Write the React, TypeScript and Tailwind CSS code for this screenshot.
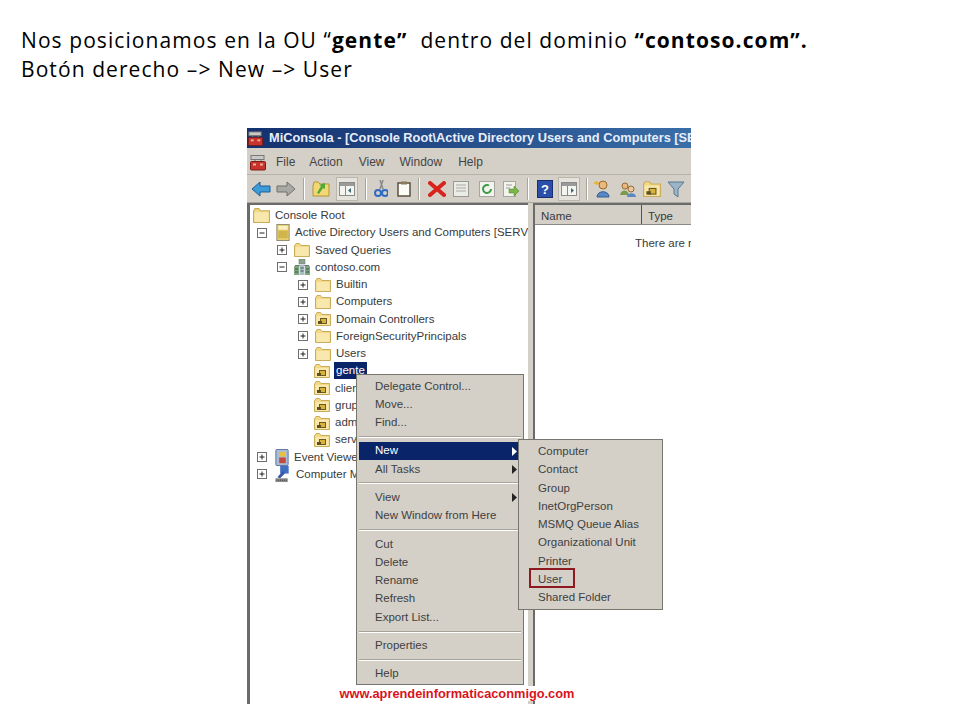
import React from "react";

const ui = "font-['Liberation_Sans',Arial,sans-serif]";

function Folder({ lock = false, className = "w-4 h-[14px]" }: { lock?: boolean; className?: string }) {
  return (
    <svg viewBox="0 0 16 14" className={`${className} shrink-0`}>
      <path d="M0.5 3 L0.5 13.5 L15.5 13.5 L15.5 2.5 L7 2.5 L5.5 0.5 L2 0.5 Z" fill="#f3d987" stroke="#c9ad5a" strokeWidth="1" />
      <rect x="1.5" y="4" width="13" height="9" fill="#f8e8ae" />
      {lock && (
        <>
          <rect x="5.5" y="6.5" width="6" height="5" fill="#d8b23c" stroke="#6b5a20" strokeWidth="1" />
          <rect x="3" y="9" width="4" height="3" fill="#5c5020" />
        </>
      )}
    </svg>
  );
}

function Toggle({ open = false }: { open?: boolean }) {
  return (
    <svg viewBox="0 0 10 10" className="w-[10px] h-[10px] shrink-0">
      <rect x="0.5" y="0.5" width="9" height="9" fill="#fff" stroke="#6e6e6e" />
      <path d={open ? "M2.5 5 H7.5" : "M2.5 5 H7.5 M5 2.5 V7.5"} stroke="#222" strokeWidth="1" />
    </svg>
  );
}

function SnapIn() {
  return (
    <svg viewBox="0 0 14 18" className="w-[14px] h-[17px] shrink-0">
      <rect x="0.5" y="0.5" width="13" height="17" fill="#e6cf6e" stroke="#8f8a70" />
      <rect x="2" y="2" width="10" height="4" fill="#f8f0c0" />
      <rect x="2" y="7" width="10" height="8" fill="#d2b44c" />
    </svg>
  );
}

function Domain() {
  return (
    <svg viewBox="0 0 16 16" className="w-4 h-4 shrink-0">
      <rect x="5" y="0" width="6" height="5" fill="#8aa58c" stroke="#5f7565" strokeWidth="0.5" />
      <path d="M1 6.5 H15" stroke="#6a7a70" />
      <rect x="0" y="7" width="5" height="9" fill="#7fa67f" />
      <rect x="5.5" y="6" width="5" height="10" fill="#a9bcc4" />
      <rect x="11" y="7" width="5" height="9" fill="#7fa67f" />
      <path d="M1 10 H4 M1 13 H4 M6.5 9 H9.5 M6.5 12 H9.5 M12 10 H15 M12 13 H15" stroke="#40524a" />
    </svg>
  );
}

function EventIcon() {
  return (
    <svg viewBox="0 0 14 18" className="w-[14px] h-[17px] shrink-0">
      <rect x="0.5" y="0.5" width="13" height="17" rx="1" fill="#a9bcd8" stroke="#5a6f96" />
      <rect x="4" y="3" width="7" height="5" fill="#e8c040" />
      <rect x="4" y="9" width="7" height="6" fill="#c8483c" />
    </svg>
  );
}

function ComputerIcon() {
  return (
    <svg viewBox="0 0 16 18" className="w-4 h-[17px] shrink-0">
      <rect x="5" y="0" width="9" height="8" fill="#3f6fc0" />
      <path d="M2 12 L8 5 L10 8 L5 13 Z" fill="#3a56a8" />
      <rect x="0" y="13" width="13" height="4" fill="#8b8b8b" />
      <path d="M1 15 H12" stroke="#333" strokeDasharray="1 1" />
    </svg>
  );
}

function ToolboxIcon({ className }: { className: string }) {
  return (
    <svg viewBox="0 0 16 16" className={className}>
      <rect x="1" y="1" width="13" height="4" fill="#c9c9c9" stroke="#777" />
      <path d="M5 7 V5 H11 V7" fill="none" stroke="#777" />
      <rect x="0.5" y="7" width="15" height="8.5" rx="1" fill="#c8342c" stroke="#7c1c18" />
      <rect x="3" y="9" width="3" height="2" fill="#f0b0a0" />
      <rect x="10" y="9" width="3" height="2" fill="#f0b0a0" />
    </svg>
  );
}

function Arrow({ dir, fill, stroke }: { dir: "left" | "right"; fill: string; stroke: string }) {
  return (
    <svg viewBox="0 0 20 16" className="w-5 h-4 shrink-0">
      <path
        d={dir === "left" ? "M1 8 L9 1 V5 H19 V11 H9 V15 Z" : "M19 8 L11 1 V5 H1 V11 H11 V15 Z"}
        fill={fill}
        stroke={stroke}
      />
    </svg>
  );
}

function PanelIcon({ side }: { side: "left" | "right" }) {
  return (
    <div className="w-[22px] h-[24px] flex items-center justify-center bg-[#e6e3dc] border border-[#b9b6ae] shrink-0">
      <svg viewBox="0 0 16 14" className="w-4 h-[14px]">
        <rect x="0.5" y="0.5" width="15" height="13" fill="#f4f4f0" stroke="#8a8a8a" />
        <rect x="1" y="1" width="14" height="3" fill="#9a9a9a" />
        <path d="M6.5 4 V13" stroke="#8a8a8a" />
        <path d={side === "left" ? "M12 6 L9 8.5 L12 11 Z" : "M10 6 L13 8.5 L10 11 Z"} fill="#3a6a70" />
      </svg>
    </div>
  );
}

function Sep() {
  return <div className="w-[2px] h-[22px] bg-[#a8a59d] border-r border-white shrink-0" />;
}

function Toolbar() {
  return (
    <div className="h-[28px] bg-[#d4d0c8] flex items-center pl-[4px] border-b border-[#aaa79f]">
      <Arrow dir="left" fill="#3d9bd8" stroke="#1d5c94" />
      <div className="ml-[5px]"><Arrow dir="right" fill="#a8a8a4" stroke="#6f6f6c" /></div>
      <div className="ml-[7px]"><Sep /></div>
      <svg viewBox="0 0 18 16" className="w-[18px] h-4 ml-[7px] shrink-0">
        <path d="M1 5 V15 H17 V3 H8 L6 1 H2 Z" fill="#f2d874" stroke="#b3952f" />
        <path d="M5 12 L9 5 L7 4 L13 2 L13 8 L11 7 L7 13 Z" fill="#4fa83a" />
      </svg>
      <div className="ml-[6px]"><PanelIcon side="left" /></div>
      <div className="ml-[7px]"><Sep /></div>
      <svg viewBox="0 0 14 18" className="w-[14px] h-[18px] ml-[7px] shrink-0">
        <path d="M9 0 L6 9 M6 0 L9 9" stroke="#8a8a8a" strokeWidth="1.5" />
        <circle cx="4" cy="13" r="3" fill="none" stroke="#2f6cc0" strokeWidth="2" />
        <circle cx="11" cy="13" r="3" fill="none" stroke="#2f6cc0" strokeWidth="2" />
      </svg>
      <svg viewBox="0 0 14 16" className="w-[14px] h-4 ml-[9px] shrink-0">
        <rect x="1" y="2" width="12" height="13" fill="#fdfdf8" stroke="#5a5040" strokeWidth="1.5" />
        <rect x="4" y="0.5" width="6" height="3" fill="#8c7a58" />
      </svg>
      <div className="ml-[7px]"><Sep /></div>
      <svg viewBox="0 0 18 16" className="w-[18px] h-4 ml-[8px] shrink-0">
        <path d="M2 2 L16 14 M16 2 L2 14" stroke="#d8241c" strokeWidth="4" strokeLinecap="round" />
      </svg>
      <svg viewBox="0 0 16 16" className="w-4 h-4 ml-[7px] shrink-0">
        <rect x="0.5" y="0.5" width="15" height="15" fill="#ecece6" stroke="#9a9a94" />
        <path d="M3 4 H13 M3 7 H13 M3 10 H13" stroke="#a8a8a8" />
      </svg>
      <svg viewBox="0 0 16 16" className="w-4 h-4 ml-[10px] shrink-0">
        <rect x="0.5" y="0.5" width="15" height="15" fill="#f4f4ee" stroke="#a6a6a0" />
        <path d="M12 8 A4 4 0 1 1 10 4.5" fill="none" stroke="#3a9a48" strokeWidth="2" />
      </svg>
      <svg viewBox="0 0 16 16" className="w-4 h-4 ml-[8px] shrink-0">
        <rect x="0.5" y="0.5" width="12" height="15" fill="#f4f4ee" stroke="#a6a6a0" />
        <path d="M3 4 H9 M3 7 H7" stroke="#999" />
        <path d="M6 8 H11 V5 L16 10 L11 15 V12 H6 Z" fill="#7ab648" stroke="#4f7f2a" strokeWidth="0.5" />
      </svg>
      <div className="ml-[8px]"><Sep /></div>
      <svg viewBox="0 0 16 18" className="w-4 h-[18px] ml-[8px] shrink-0">
        <rect x="0.5" y="0.5" width="15" height="17" fill="#2a4fa8" stroke="#1a2f70" />
        <text x="8" y="14" textAnchor="middle" fontSize="13" fontWeight="700" fill="#fff" fontFamily="Liberation Sans">?</text>
      </svg>
      <div className="ml-[5px]"><PanelIcon side="right" /></div>
      <div className="ml-[6px]"><Sep /></div>
      <svg viewBox="0 0 20 18" className="w-5 h-[18px] ml-[5px] shrink-0">
        <circle cx="10" cy="5" r="4" fill="#e8b87c" stroke="#9a6a30" />
        <path d="M4 17 C4 10 16 10 16 17 Z" fill="#5a88c4" stroke="#345c90" />
        <path d="M1 3 H6 M3.5 1 V5" stroke="#e8b030" strokeWidth="1.5" />
      </svg>
      <svg viewBox="0 0 18 18" className="w-[18px] h-[18px] ml-[6px] shrink-0">
        <circle cx="6" cy="6" r="3" fill="#e8b87c" stroke="#9a6a30" />
        <circle cx="12" cy="9" r="3" fill="#e8c8a0" stroke="#9a6a30" />
        <path d="M1 15 C2 9 9 9 10 15 Z" fill="#7a9a50" />
        <path d="M8 17 C8 12 17 12 17 17 Z" fill="#5a88c4" />
      </svg>
      <div className="ml-[6px]"><Folder lock className="w-[18px] h-4" /></div>
      <svg viewBox="0 0 18 18" className="w-[18px] h-[18px] ml-[6px] shrink-0">
        <path d="M1 2 H17 L11 9 V17 L7 14 V9 Z" fill="#9ab4c8" stroke="#5a7890" />
      </svg>
    </div>
  );
}

type Row = {
  label: string;
  pad: string;
  toggle?: "open" | "closed";
  spacer?: string;
  icon: React.ReactNode;
  selected?: boolean;
};

const folder = <Folder />;
const ou = <Folder lock />;

const rows: Row[] = [
  { label: "Console Root", pad: "pl-[3px]", icon: <Folder className="w-[17px] h-[15px]" /> },
  { label: "Active Directory Users and Computers [SERVER]", pad: "pl-[7px]", toggle: "open", spacer: "w-[9px]", icon: <SnapIn /> },
  { label: "Saved Queries", pad: "pl-[27px]", toggle: "closed", spacer: "w-[7px]", icon: folder },
  { label: "contoso.com", pad: "pl-[27px]", toggle: "open", spacer: "w-[7px]", icon: <Domain /> },
  { label: "Builtin", pad: "pl-[48px]", toggle: "closed", spacer: "w-[7px]", icon: folder },
  { label: "Computers", pad: "pl-[48px]", toggle: "closed", spacer: "w-[7px]", icon: folder },
  { label: "Domain Controllers", pad: "pl-[48px]", toggle: "closed", spacer: "w-[7px]", icon: ou },
  { label: "ForeignSecurityPrincipals", pad: "pl-[48px]", toggle: "closed", spacer: "w-[7px]", icon: folder },
  { label: "Users", pad: "pl-[48px]", toggle: "closed", spacer: "w-[7px]", icon: folder },
  { label: "gente", pad: "pl-[64px]", icon: ou, selected: true },
  { label: "clientes", pad: "pl-[64px]", icon: ou },
  { label: "grupos", pad: "pl-[64px]", icon: ou },
  { label: "admin", pad: "pl-[64px]", icon: ou },
  { label: "servidores", pad: "pl-[64px]", icon: ou },
  { label: "Event Viewer", pad: "pl-[7px]", toggle: "closed", spacer: "w-[8px]", icon: <EventIcon /> },
  { label: "Computer Management", pad: "pl-[7px]", toggle: "closed", spacer: "w-[8px]", icon: <ComputerIcon /> },
];

function Tree() {
  return (
    <div className="w-[281px] shrink-0 bg-white border-l-[3px] border-t-2 border-[#6b6b6b] pt-[2px] text-[11.5px] text-[#3a3a3a] overflow-hidden">
      {rows.map((r) => (
        <div key={r.label} className={`h-[17.25px] flex items-center whitespace-nowrap ${r.pad}`}>
          {r.toggle && <Toggle open={r.toggle === "open"} />}
          {r.spacer && <span className={`${r.spacer} shrink-0`} />}
          {r.icon}
          <span
            className={
              r.selected
                ? "ml-[4px] px-[2px] bg-[#0a246a] text-white leading-[17px]"
                : "ml-[5px] leading-[17px]"
            }
          >
            {r.label}
          </span>
        </div>
      ))}
    </div>
  );
}

function ResultPane() {
  return (
    <div className="flex-1 min-w-0 bg-white border-l-2 border-t-2 border-[#6b6b6b] text-[11.5px] text-[#3a3a3a] overflow-hidden">
      <div className="flex h-[20px] bg-[#d4d0c8] border-b border-[#8a8a84]">
        <div className="w-[107px] pl-[6px] leading-[22px] border-r border-[#55534e]">Name</div>
        <div className="pl-[6px] leading-[22px]">Type</div>
      </div>
      <div className="mt-[10px] pl-[100px] whitespace-nowrap">There are no items to show in this view.</div>
    </div>
  );
}

function MenuItem({ label, arrow, active }: { label: string; arrow?: boolean; active?: boolean }) {
  return (
    <div
      className={`h-[18.3px] flex items-center justify-between pl-[16px] pr-[4px] ${
        active ? "bg-[#0a246a] text-white" : ""
      }`}
    >
      <span>{label}</span>
      {arrow && (
        <svg viewBox="0 0 5 9" className="w-[5px] h-[9px]">
          <path d="M0 0 L5 4.5 L0 9 Z" fill={active ? "#fff" : "#222"} />
        </svg>
      )}
    </div>
  );
}

function MenuSep() {
  return (
    <div className="h-[10px] flex items-center">
      <div className="w-full h-[2px] bg-[#a5a29a] border-b border-white" />
    </div>
  );
}

function ContextMenu() {
  return (
    <div className="absolute left-[109px] top-[246px] w-[168px] h-[311px] bg-[#d4d0c8] border border-[#77756f] pt-[2px] px-[2px] text-[11.5px] text-[#3f3f3f]">
      <MenuItem label="Delegate Control..." />
      <MenuItem label="Move..." />
      <MenuItem label="Find..." />
      <MenuSep />
      <MenuItem label="New" arrow active />
      <MenuItem label="All Tasks" arrow />
      <MenuSep />
      <MenuItem label="View" arrow />
      <MenuItem label="New Window from Here" />
      <MenuSep />
      <MenuItem label="Cut" />
      <MenuItem label="Delete" />
      <MenuItem label="Rename" />
      <MenuItem label="Refresh" />
      <MenuItem label="Export List..." />
      <MenuSep />
      <MenuItem label="Properties" />
      <MenuSep />
      <MenuItem label="Help" />
    </div>
  );
}

const newItems = ["Computer", "Contact", "Group", "InetOrgPerson", "MSMQ Queue Alias", "Organizational Unit", "Printer", "User", "Shared Folder"];

function SubMenu() {
  return (
    <div className="absolute left-[271px] top-[311px] w-[145px] h-[171px] bg-[#d4d0c8] border border-[#77756f] pt-[2px] pl-[19px] text-[11.5px] text-[#3f3f3f]">
      {newItems.map((label) => (
        <div key={label} className="h-[18.3px] leading-[18.3px] whitespace-nowrap">
          {label}
        </div>
      ))}
      <div className="absolute left-[10px] top-[128px] w-[46px] h-[20px] border-2 border-[#8c1a1e]" />
    </div>
  );
}

export default function App() {
  return (
    <div className="w-[960px] h-[720px] bg-white overflow-hidden">
      <div className="pt-[26px] pl-[21px] text-[21px] leading-[29px] text-black font-['Open_Sans',sans-serif] tracking-[1.08px] whitespace-pre">
        <div>
          Nos posicionamos en la OU “<b>gente”</b>  dentro del dominio <b>“contoso.com”.</b>
        </div>
        <div>Botón derecho –&gt; New –&gt; User</div>
      </div>

      <div className={`relative ml-[247px] mt-[44px] w-[444px] h-[576px] overflow-hidden flex flex-col bg-[#d4d0c8] ${ui}`}>
        <div className="h-[20px] shrink-0 flex items-center bg-gradient-to-r from-[#14306f] to-[#3a6ea8] pl-[1px] text-[12.8px] font-bold text-[#e8eefa] whitespace-nowrap overflow-hidden">
          <ToolboxIcon className="w-[15px] h-[15px] shrink-0" />
          <span className="ml-[6px]">MiConsola - [Console Root\Active Directory Users and Computers [SERVER]</span>
        </div>
        <div className="h-[27px] shrink-0 flex items-center pl-[3px] pt-[2px] text-[12px] text-[#444] border-b border-[#b5b2aa]">
          <ToolboxIcon className="w-[16px] h-[17px] shrink-0" />
          <span className="ml-[10px]">File</span>
          <span className="ml-[14px]">Action</span>
          <span className="ml-[16px]">View</span>
          <span className="ml-[15px]">Window</span>
          <span className="ml-[16px]">Help</span>
        </div>
        <Toolbar />
        <div className="flex-1 min-h-0 flex">
          <Tree />
          <div className="w-[5px] shrink-0 bg-[#d4d0c8]" />
          <ResultPane />
        </div>
        <ContextMenu />
        <SubMenu />
        <div className="absolute left-[90px] top-[558px] w-[240px] h-[15px] bg-white text-center text-[12.8px] leading-[15px] font-bold text-[#d8141c] whitespace-nowrap">
          www.aprendeinformaticaconmigo.com
        </div>
      </div>
    </div>
  );
}
